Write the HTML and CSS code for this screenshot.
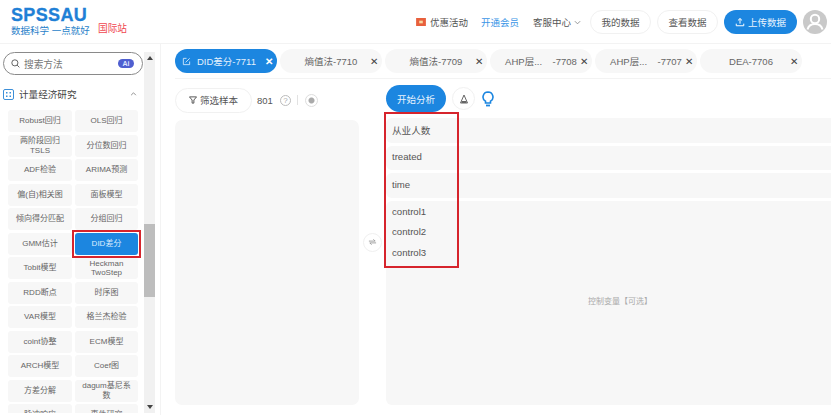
FILE: index.html
```html
<!DOCTYPE html>
<html lang="zh">
<head>
<meta charset="utf-8">
<title>SPSSAU</title>
<link rel="stylesheet" href="styles.css">
</head>
<body>
<div class="page">
  <header class="topbar">
    <div class="brand">
      <div class="logo">SPSSAU</div>
      <div class="slogan">数据科学 一点就好</div>
    </div>
    <a class="intl">国际站</a>
    <div class="top-actions">
      <span class="promo"><svg class="gift" viewBox="0 0 11 9"><rect width="11" height="9" fill="#e8603c"/><rect x="3.5" y="3" width="4" height="3" fill="#f6d9a0"/></svg>优惠活动</span>
      <a class="vip">开通会员</a>
      <span class="service">客服中心<svg class="chev" viewBox="0 0 8 5"><path d="M1 1l3 3 3-3" fill="none" stroke="#888" stroke-width="1"/></svg></span>
      <button class="pill">我的数据</button>
      <button class="pill">查看数据</button>
      <button class="upload"><svg class="up-ic" viewBox="0 0 12 12"><path d="M6 8V2M3.5 4.2L6 1.8l2.5 2.4M1.5 8v2.5h9V8" fill="none" stroke="#fff" stroke-width="1.2"/></svg>上传数据</button>
      <svg class="avatar" viewBox="0 0 24 24"><circle cx="12" cy="12" r="12" fill="#c9c9c9"/><circle cx="12" cy="9" r="4.2" fill="none" stroke="#fff" stroke-width="2"/><path d="M4.5 19.5c1-4 4-5.5 7.500-5.500s6.500 1.500 7.500 5.500" fill="none" stroke="#fff" stroke-width="2"/></svg>
    </div>
  </header>

  <div class="body">
    <aside class="sidebar">
      <div class="side-main">
        <div class="search">
          <svg class="search-ic" viewBox="0 0 10 10"><circle cx="4.300" cy="4.300" r="3.400" fill="none" stroke="#555" stroke-width="1"/><path d="M6.800 6.800L9.300 9.300" stroke="#555" stroke-width="1"/></svg>
          <span class="search-text">搜索方法</span>
          <span class="ai">Ai</span>
        </div>
        <div class="section">
          <svg class="sec-ic" viewBox="0 0 11 11"><rect x=".5" y=".5" width="10" height="10" rx="1.500" fill="none" stroke="#3d8fd8"/><path d="M3 3h1.500v1.500H3zM6.500 3H8v1.500H6.500zM3 6.500h1.500V8H3zM6.500 6.500H8V8H6.500z" fill="#3d8fd8"/></svg>
          <span class="sec-title">计量经济研究</span>
          <svg class="sec-chev" viewBox="0 0 8 5"><path d="M1 4l3-3 3 3" fill="none" stroke="#777" stroke-width="1"/></svg>
        </div>
        <div class="methods">
          <div class="method">Robust回归</div><div class="method">OLS回归</div>
          <div class="method">两阶段回归<br>TSLS</div><div class="method">分位数回归</div>
          <div class="method">ADF检验</div><div class="method">ARIMA预测</div>
          <div class="method">偏(自)相关图</div><div class="method">面板模型</div>
          <div class="method">倾向得分匹配</div><div class="method">分组回归</div>
          <div class="method">GMM估计</div><div class="method active">DID差分</div>
          <div class="method">Tobit模型</div><div class="method">Heckman<br>TwoStep</div>
          <div class="method">RDD断点</div><div class="method">时序图</div>
          <div class="method">VAR模型</div><div class="method">格兰杰检验</div>
          <div class="method">coint协整</div><div class="method">ECM模型</div>
          <div class="method">ARCH模型</div><div class="method">Coef图</div>
          <div class="method">方差分解</div><div class="method">dagum基尼系<br>数</div>
          <div class="method">脉冲响应</div><div class="method">事件研究</div>
        </div>
      </div>
      <div class="scrollbar">
        <svg class="arrow" viewBox="0 0 6 4"><path d="M3 0l3 4H0z" fill="#444"/></svg>
        <div class="thumb"></div>
        <svg class="arrow" viewBox="0 0 6 4"><path d="M0 0h6L3 4z" fill="#444"/></svg>
      </div>
    </aside>

    <main class="content">
      <nav class="tabs">
        <div class="tab on"><svg class="tab-ic" viewBox="0 0 10 10"><path d="M5 1.500H1.500v7h7V5M4 6l4.500-4.500" fill="none" stroke="#cfe6fb" stroke-width="1"/></svg><span class="tab-name">DID差分-7711</span><span class="x">✕</span></div>
        <div class="tab"><span class="tab-name">熵值法-7710</span><span class="x">✕</span></div>
        <div class="tab"><span class="tab-name">熵值法-7709</span><span class="x">✕</span></div>
        <div class="tab"><span class="tab-name">AHP层...&nbsp;&nbsp;&nbsp;&nbsp;-7708</span><span class="x">✕</span></div>
        <div class="tab"><span class="tab-name">AHP层...&nbsp;&nbsp;&nbsp;&nbsp;-7707</span><span class="x">✕</span></div>
        <div class="tab"><span class="tab-name">DEA-7706</span><span class="x">✕</span></div>
      </nav>
      <div class="work">
        <div class="left">
          <div class="filter-row">
            <button class="filter"><svg class="fun" viewBox="0 0 9 9"><path d="M.5 1h8L5.500 4.500V8h-2V4.500z" fill="none" stroke="#555" stroke-width="1.100"/></svg>筛选样本</button>
            <span class="count">801</span>
            <span class="help">?</span>
            <span class="sep"></span>
            <span class="radio"></span>
          </div>
          <div class="var-list"></div>
        </div>
        <div class="swap-col"><span class="swap"><svg viewBox="0 0 10 8" class="swap-ic"><path d="M1 3h7L6 1M9 5H2l2 2" fill="none" stroke="#999" stroke-width="1"/></svg></span></div>
        <div class="right">
          <div class="action-row">
            <button class="start">开始分析</button>
            <span class="tool"><svg viewBox="0 0 10 10" class="tool-ic"><path d="M5 1l3.500 8h-7z" fill="none" stroke="#666" stroke-width="1"/><path d="M2.500 7h5v2h-5z" fill="#666"/></svg></span>
            <svg class="bulb" viewBox="0 0 12 16"><path d="M6 1a5 5 0 0 0-2.500 9.300V12h5v-1.700A5 5 0 0 0 6 1z" fill="none" stroke="#1c86e0" stroke-width="1.600"/><path d="M4 14.500h4" stroke="#1c86e0" stroke-width="1.800"/></svg>
          </div>
          <div class="fields">
            <div class="field">从业人数</div>
            <div class="field shifted">treated</div>
            <div class="field shifted">time</div>
            <div class="field big">
              <div class="ctrl">control1</div>
              <div class="ctrl">control2</div>
              <div class="ctrl">control3</div>
              <div class="hint">控制变量【可选】</div>
            </div>
            <div class="redbox"></div>
          </div>
        </div>
      </div>
    </main>
  </div>
</div>
</body>
</html>
```

FILE: styles.css
```css
* { box-sizing: border-box; }
html, body { margin: 0; padding: 0; background: #fff; }
body { font-family: "Liberation Sans", "Noto Sans CJK SC", sans-serif; color: #555; font-size: 11px; }
.page { width: 831px; height: 415px; overflow: hidden; display: flex; flex-direction: column; }

.topbar { height: 44px; flex: none; display: flex; align-items: flex-start; border-bottom: 1px solid #f3f3f3; padding: 8px 4px 0 11px; }
.brand { width: 87px; flex: none; }
.logo { font-size: 18px; font-weight: 700; line-height: 15px; color: #1f80d6; letter-spacing: .35px; -webkit-text-stroke: .3px #1f80d6; }
.slogan { font-size: 9.500px; line-height: 12px; margin-top: 2px; color: #2a7fc9; white-space: nowrap; }
.intl { color: #f0474f; font-size: 9.700px; line-height: 12px; margin-top: 15px; }
.top-actions { margin-left: auto; display: flex; align-items: center; height: 24px; margin-top: 2px; font-size: 9.500px; }
.promo { display: flex; align-items: center; gap: 4px; }
.gift { width: 10px; height: 8px; }
.vip { color: #3a95e6; margin-left: 13px; }
.service { margin-left: 14px; display: flex; align-items: center; gap: 3px; }
.chev { width: 7px; height: 5px; }
button { font-family: inherit; cursor: pointer; }
.pill { width: 61px; height: 24px; margin-left: 6px; border: 1px solid #f1f1f1; border-radius: 12px; background: #fff; color: #555; font-size: 9.500px; padding: 0; }
.service + .pill { margin-left: 9px; }
.upload { width: 73px; height: 24px; margin-left: 6px; border: 0; border-radius: 12px; background: #1c86e0; color: #e8f3fd; font-size: 9.500px; display: flex; align-items: center; justify-content: center; gap: 3px; padding: 0; }
.up-ic { width: 10px; height: 10px; }
.avatar { width: 24px; height: 24px; margin-left: 6px; }

.body { flex: 1; min-height: 0; display: flex; }
.sidebar { width: 161px; flex: none; border-right: 1px solid #f3f3f3; display: flex; padding: 8px 5px 2px 3px; gap: 1px; }
.side-main { width: 140px; flex: none; overflow: hidden; }
.scrollbar { width: 11px; flex: none; background: #f1f1f1; display: flex; flex-direction: column; align-items: center; justify-content: space-between; padding: 4px 0; position: relative; }
.arrow { width: 6px; height: 4px; }
.thumb { position: absolute; left: 0; right: 0; top: 172px; height: 73px; background: #bdbdbd; }

.search { height: 23px; border: 1px solid #8a8a8a; border-radius: 12px; display: flex; align-items: center; padding: 0 8px 0 7px; }
.search-ic { width: 9px; height: 9px; flex: none; }
.search-text { margin-left: 4px; font-size: 9.700px; color: #777; }
.ai { margin-left: auto; width: 16px; height: 9px; border-radius: 5px; background: #4f5fd0; color: #dfe4ff; font-size: 7px; line-height: 9px; text-align: center; font-weight: 700; }

.section { display: flex; align-items: center; height: 20px; margin-top: 9px; }
.sec-ic { width: 11px; height: 11px; }
.sec-title { margin-left: 5px; font-size: 9.600px; color: #444; }
.sec-chev { width: 7px; height: 4px; margin-left: auto; margin-right: 6px; }

.methods { display: grid; grid-template-columns: 64px 63px; grid-auto-rows: 22px; gap: 2.500px 3px; margin: 6px 0 0 5px; }
.method { background: #f7f7f7; border-radius: 3px; display: flex; align-items: center; justify-content: center; text-align: center; font-size: 8px; line-height: 9.500px; color: #666; padding: 0 2px; }
.method.active { background: #1c86e0; color: #dcedfd; position: relative; }
.method.active::after { content: ""; position: absolute; inset: -3px; border: 2px solid #d6242c; }

.content { flex: 1; min-width: 0; display: flex; flex-direction: column; padding-left: 14px; }
.tabs { height: 35px; flex: none; display: flex; gap: 3px; padding-top: 5px; border-bottom: 1px solid #f3f3f3; }
.tab { width: 102px; height: 24px; flex: none; border-radius: 12px; background: #f7f7f7; display: flex; align-items: center; padding: 0 2px 0 15px; font-size: 9.500px; color: #666; }
.tab.on { background: #1c86e0; color: #e3f0fc; padding-left: 6px; }
.tab.on .tab-name { text-align: left; margin-left: 6px; }
.tab-ic { width: 9px; height: 9px; margin-left: 1px; flex: none; }
.tab-name { flex: 1; text-align: center; white-space: nowrap; }
.x { font-size: 9.500px; width: 13px; text-align: center; color: #444; }
.tab.on .x { color: #fff; font-weight: 700; }

.work { flex: 1; min-height: 0; display: flex; }
.left { width: 184px; flex: none; display: flex; flex-direction: column; }
.filter-row { height: 41px; flex: none; display: flex; align-items: center; padding-top: 1px; }
.filter { width: 77px; height: 25px; border: 1px solid #f1f1f1; border-radius: 13px; background: #fff; color: #555; font-size: 9.500px; display: flex; align-items: center; justify-content: center; gap: 3px; padding: 0; }
.fun { width: 8px; height: 8px; }
.count { margin-left: 5px; font-size: 9.500px; }
.help { margin-left: 7px; width: 11px; height: 11px; border: 1px solid #bbb; border-radius: 50%; color: #aaa; font-size: 8px; line-height: 9px; text-align: center; }
.sep { width: 1px; height: 10px; background: #e2e2e2; margin: 0 7px 0 6px; }
.radio { width: 13px; height: 13px; border-radius: 50%; border: 1px solid #ddd; background: radial-gradient(circle, #aaa 0 2.500px, #fff 3.500px); }
.var-list { flex: 1; background: #f7f7f7; border-radius: 7px; margin-bottom: 10px; }

.swap-col { width: 27px; flex: none; display: flex; align-items: center; justify-content: center; padding-bottom: 10px; }
.swap { width: 19px; height: 19px; border: 1px solid #f0f0f0; border-radius: 50%; display: flex; align-items: center; justify-content: center; }
.swap-ic { width: 9px; height: 8px; }

.right { flex: 1; min-width: 0; display: flex; flex-direction: column; }
.action-row { height: 39px; flex: none; display: flex; align-items: center; }
.start { width: 60px; height: 27px; border: 0; border-radius: 14px; background: #1c86e0; color: #e8f3fd; font-size: 9.500px; padding: 0; }
.tool { width: 23px; height: 23px; border: 1px solid #f1f1f1; border-radius: 50%; margin-left: 6px; display: flex; align-items: center; justify-content: center; }
.tool-ic { width: 10px; height: 10px; }
.bulb { width: 12px; height: 16px; margin-left: 7px; }

.fields { flex: 1; min-height: 0; display: flex; flex-direction: column; gap: 3px; position: relative; margin-bottom: 10px; }
.field { height: 24.500px; flex: none; background: #f7f7f7; border-radius: 6px 0 0 6px; font-size: 9.600px; color: #555; display: flex; align-items: center; padding-left: 6px; }
.field.shifted { padding-bottom: 2px; }
.field.big { flex: 1; height: auto; display: flex; flex-direction: column; align-items: flex-start; position: relative; padding-top: 1px; }
.ctrl { height: 20.500px; line-height: 20.500px; }
.hint { position: absolute; left: 202px; top: 94px; font-size: 8px; color: #aaa; }
.redbox { position: absolute; left: -2px; top: -6px; width: 75px; height: 156px; border: 2px solid #d6242c; pointer-events: none; }
```
